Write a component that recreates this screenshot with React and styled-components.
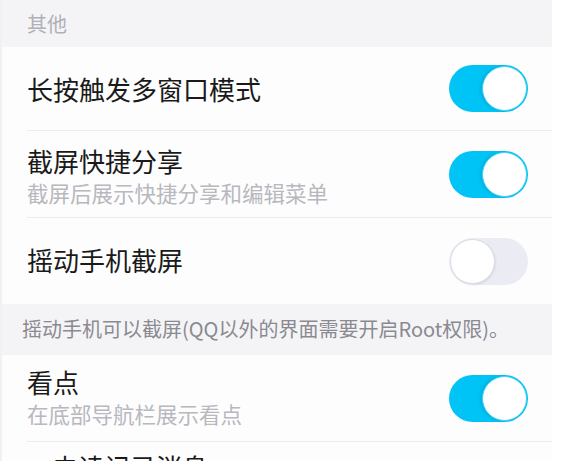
import React, { useState } from "react";
import styled, { createGlobalStyle } from "styled-components";

const GlobalStyle = createGlobalStyle`
  html, body {
    margin: 0;
    padding: 0;
    background: #ffffff;
    overflow: hidden;
  }
  body {
    font-family: "Noto Sans CJK SC", "Noto Sans", sans-serif;
  }
`;

const Page = styled.div`
  width: 552px;
  height: 461px;
  overflow: hidden;
  background: #fdfdfd;
  border-left: 2px solid #f1f1f4;
  box-sizing: border-box;
`;

const SectionHeader = styled.div`
  height: ${(props) => props.height || 47}px;
  background: #f4f4f7;
  display: flex;
  align-items: center;
  padding-left: ${(props) => props.indent || 25}px;
  padding-bottom: ${(props) => props.lift || 0}px;
  box-sizing: border-box;
  color: ${(props) => props.color || "#b0b0b6"};
  font-size: ${(props) => props.size || 20}px;
  white-space: nowrap;
`;

const Row = styled.div`
  height: ${(props) => props.height}px;
  margin-left: 25px;
  padding-right: 24px;
  display: flex;
  align-items: center;
  justify-content: space-between;
  border-bottom: ${(props) => (props.divider ? "1px solid #ececef" : "none")};
  box-sizing: border-box;
`;

const Texts = styled.div`
  display: flex;
  flex-direction: column;
  margin-top: ${(props) => props.shift || 0}px;
`;

const Title = styled.div`
  color: #1a1a1a;
  font-size: 26px;
  line-height: 34px;
  padding-left: ${(props) => props.indent || 0}px;
  white-space: nowrap;
`;

const Subtitle = styled.div`
  color: #b8b8be;
  font-size: 21.5px;
  line-height: 28px;
  margin-top: 1px;
  white-space: nowrap;
`;

const Track = styled.button`
  width: 79px;
  height: 47px;
  border-radius: 24px;
  border: none;
  padding: 0;
  position: relative;
  cursor: pointer;
  flex-shrink: 0;
  background: ${(props) => (props.on ? "#00c4f5" : "#ebebf4")};
`;

const Knob = styled.span`
  position: absolute;
  top: 1px;
  left: ${(props) => (props.on ? "33px" : "1px")};
  width: 45px;
  height: 45px;
  border-radius: 50%;
  background: #ffffff;
  box-sizing: border-box;
  border: 1.5px solid ${(props) => (props.on ? "#3fd0f6" : "#dcdce6")};
  box-shadow: ${(props) =>
    props.on ? "-2px 0 3px rgba(0, 120, 170, 0.25)" : "1px 1px 2px rgba(0,0,0,0.08)"};
`;

const Toggle = ({ initial }) => {
  const [on, setOn] = useState(initial);
  return (
    <Track on={on} onClick={() => setOn(!on)}>
      <Knob on={on} />
    </Track>
  );
};

const App = () => (
  <>
    <GlobalStyle />
    <Page>
      <SectionHeader height={47} indent={25} size={20}>
        其他
      </SectionHeader>
      <Row height={84} divider>
        <Texts>
          <Title>长按触发多窗口模式</Title>
        </Texts>
        <Toggle initial={true} />
      </Row>
      <Row height={87} divider>
        <Texts shift={2}>
          <Title>截屏快捷分享</Title>
          <Subtitle>截屏后展示快捷分享和编辑菜单</Subtitle>
        </Texts>
        <Toggle initial={true} />
      </Row>
      <Row height={86}>
        <Texts shift={-2}>
          <Title>摇动手机截屏</Title>
        </Texts>
        <Toggle initial={false} />
      </Row>
      <SectionHeader height={51} indent={20} size={20} color="#8a8a90" lift={3}>
        摇动手机可以截屏(QQ以外的界面需要开启Root权限)。
      </SectionHeader>
      <Row height={87} divider>
        <Texts shift={-4}>
          <Title>看点</Title>
          <Subtitle>在底部导航栏展示看点</Subtitle>
        </Texts>
        <Toggle initial={true} />
      </Row>
      <Row height={87}>
        <Texts shift={-37}>
          <Title indent={25}>未读记录消息</Title>
        </Texts>
        <Toggle initial={false} />
      </Row>
    </Page>
  </>
);

export default App;
